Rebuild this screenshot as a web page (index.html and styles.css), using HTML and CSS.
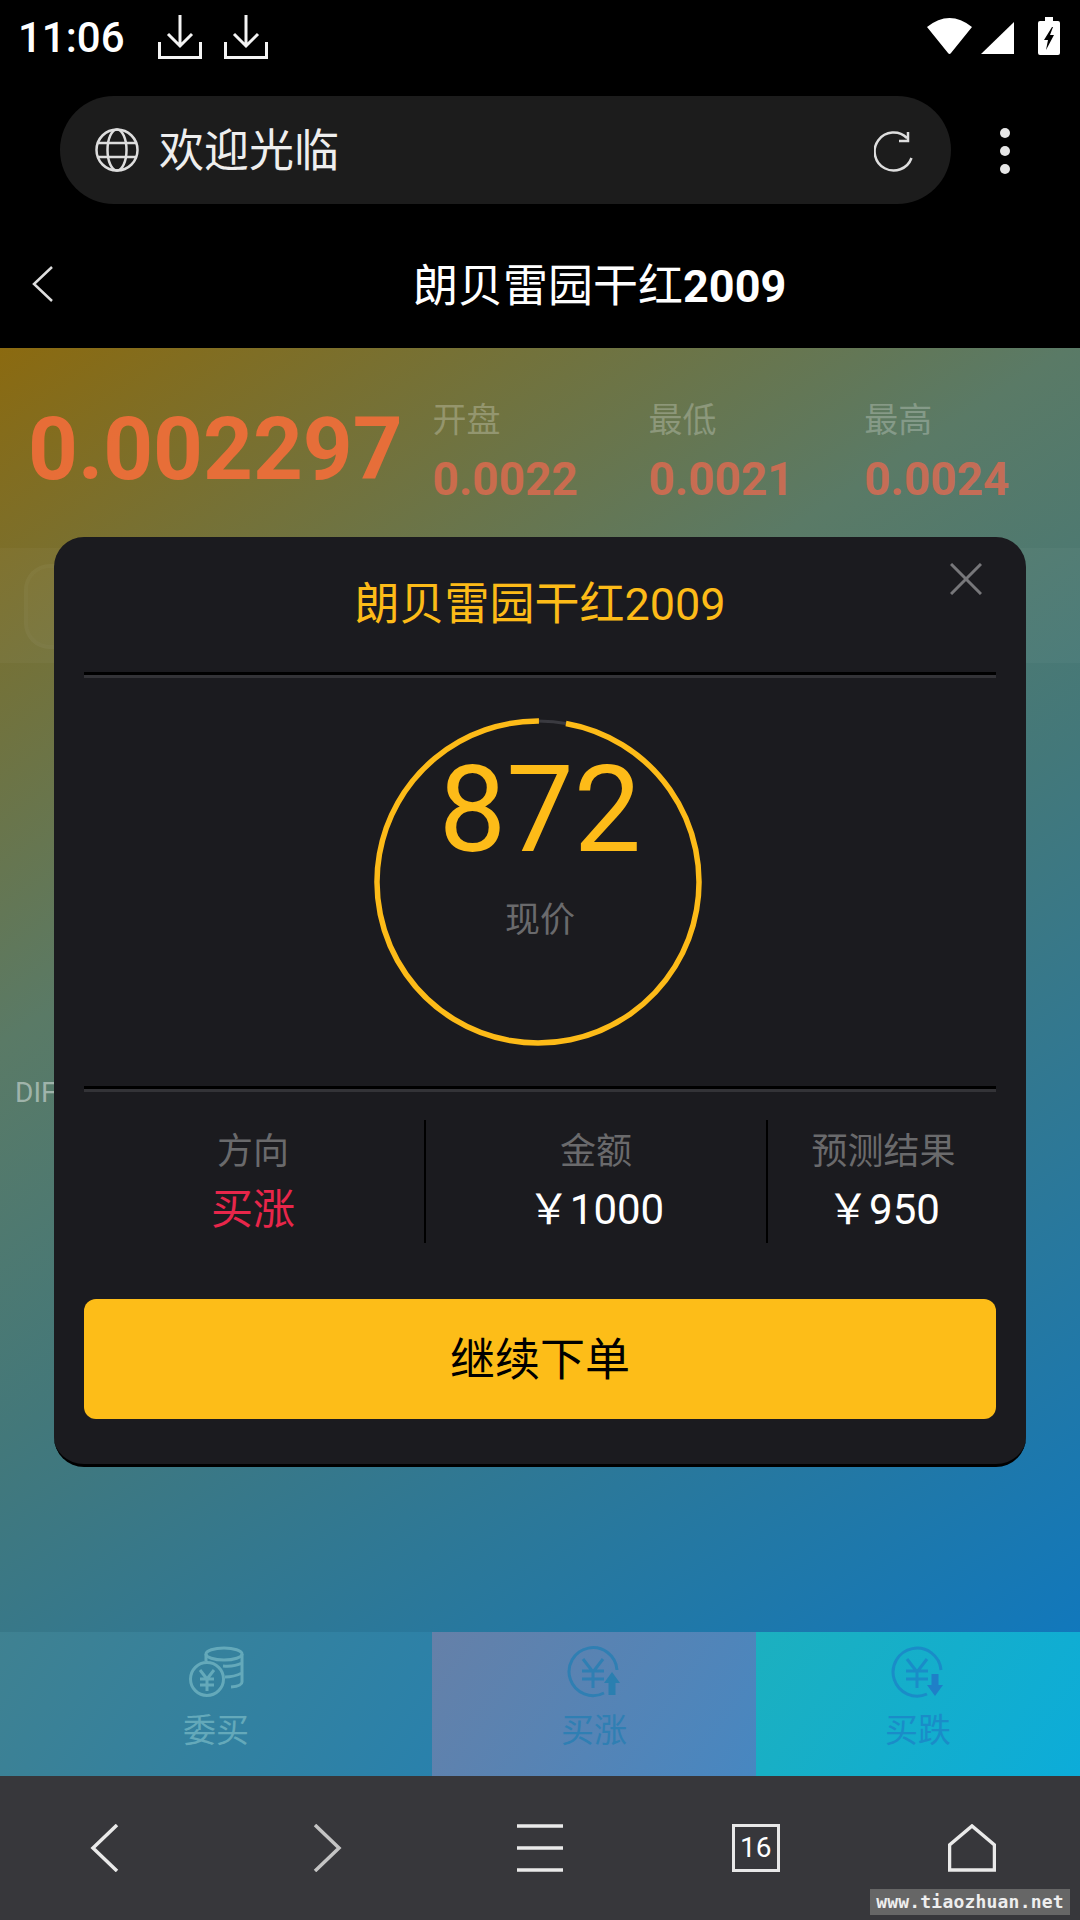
FILE: index.html
```html
<!DOCTYPE html>
<html>
	<head>
		<meta charset="UTF-8">
		<title>朗贝雷园干红2009</title>
		<link rel="stylesheet" href="styles.css">
	</head>
	<body>
		<div class="status">
			<span class="time">11:06</span>
			<svg class="dl" width="44" height="44" viewBox="0 0 44 44"><path d="M22 0V31M10 19L22 31L34 19M1.5 27V42.5H42.5V27" /></svg>
			<svg class="dl" width="44" height="44" viewBox="0 0 44 44"><path d="M22 0V31M10 19L22 31L34 19M1.5 27V42.5H42.5V27" /></svg>
			<span class="grow"></span>
			<svg class="wifi" width="45" height="36" viewBox="0 0 45 36"><path class="solid" d="M0 9Q22.5 -9 45 9L24 35Q22.5 37 21 35Z" /></svg>
			<svg class="signal" width="34" height="33" viewBox="0 0 34 33"><path class="solid" d="M34 1V33H1Z" /></svg>
			<svg class="batt" width="22" height="38" viewBox="0 0 22 38"><path class="solid" fill-rule="evenodd" d="M7 0H15V4H20Q22 4 22 6V36Q22 38 20 38H2Q0 38 0 36V6Q0 4 2 4H7ZM14 10L6 23H10L8 33L16 18H12L15 10Z" /></svg>
		</div>

		<div class="urlrow">
			<div class="url">
				<svg class="line" width="44" height="44" viewBox="0 0 44 44"><circle cx="22" cy="22" r="20.5" /><ellipse cx="22" cy="22" rx="9.5" ry="20.5" /><path d="M2 15H42M2 29H42" /></svg>
				<span class="urltext">欢迎光临</span>
				<span class="grow"></span>
				<svg class="line reload" width="42" height="42" viewBox="0 0 42 42"><path d="M37.5 27A19 19 0 1 1 33 7M34 1V10H25" /></svg>
			</div>
			<div class="dots"><i></i><i></i><i></i></div>
		</div>

		<div class="head">
			<svg class="line back" width="22" height="36" viewBox="0 0 22 36"><path d="M20 1L2 18L20 35" /></svg>
			<h1>朗贝雷园干红<b>2009</b></h1>
		</div>

		<div class="main">
			<div class="prices">
				<div class="price">0.002297</div>
				<div class="stat"><span>开盘</span><b>0.0022</b></div>
				<div class="stat"><span>最低</span><b>0.0021</b></div>
				<div class="stat"><span>最高</span><b>0.0024</b></div>
			</div>
			<div class="band"><div class="bandbox"></div></div>
			<div class="dif">DIF</div>

			<div class="modal">
				<h2>朗贝雷园干红2009</h2>
				<svg class="close" width="32" height="32" viewBox="0 0 32 32"><path d="M1 1L31 31M31 1L1 31" /></svg>
				<div class="rule"></div>
				<div class="ringwrap">
					<svg class="ring" width="330" height="330" viewBox="0 0 330 330">
						<circle class="track" cx="165" cy="165" r="161" />
						<circle class="arc" cx="165" cy="165" r="161" stroke-dasharray="984 28" transform="rotate(-80 165 165)" />
					</svg>
					<div class="count">872</div>
					<div class="countlabel">现价</div>
				</div>
				<div class="rule"></div>
				<div class="info">
					<div class="cell first"><span>方向</span><b class="red">买涨</b></div>
					<div class="cell mid"><span>金额</span><b>￥1000</b></div>
					<div class="cell last"><span>预测结果</span><b>￥950</b></div>
				</div>
				<div class="btn">继续下单</div>
			</div>
		</div>

		<div class="tabs">
			<div class="tab t1">
				<svg width="56" height="52" viewBox="0 0 56 52"><ellipse cx="36" cy="8" rx="18" ry="6" /><path d="M18 8V15M54 8V36Q54 40 43 41M35 20Q46 21 54 17M37 31Q46 31 54 27" /><circle cx="19" cy="33" r="16.5" /><path d="M12 24L19 33L26 24M12 33H26M12 39H26M19 33V45" /></svg>
				<span>委买</span>
			</div>
			<div class="tab t2">
				<svg width="56" height="52" viewBox="0 0 56 52"><path d="M51 24A24 24 0 1 0 38 47" /><path d="M17 13L27 26L37 13M16 25H38M16 33H38M27 26V42" /><path class="fillit" d="M46 26L54 37H49.5V49H42.5V37H38Z" /></svg>
				<span>买涨</span>
			</div>
			<div class="tab t3">
				<svg width="56" height="52" viewBox="0 0 56 52"><path d="M51 24A24 24 0 1 0 37 48" /><path d="M17 13L27 26L37 13M16 25H38M16 33H38M27 26V42" /><path class="fillit" d="M41.5 28H48.5V39H53L45 50L37 39H41.5Z" /></svg>
				<span>买跌</span>
			</div>
		</div>

		<div class="nav">
			<svg class="navicon" width="48" height="48" viewBox="0 0 48 48"><path d="M34 1L10 24L34 47" /></svg>
			<svg class="navicon dim" width="48" height="48" viewBox="0 0 48 48"><path d="M16 1L40 24L16 47" /></svg>
			<svg class="navicon" width="48" height="48" viewBox="0 0 48 48"><path d="M1 2H47M1 24H47M1 46H47" /></svg>
			<div class="tabcount">16</div>
			<svg class="navicon" width="48" height="48" viewBox="0 0 48 48"><path d="M1.5 46V21L24 2L46.5 21V46Z" /></svg>
			<div class="mark">www.tiaozhuan.net</div>
		</div>
	</body>
</html>
```

FILE: styles.css
```css
* {
	box-sizing: border-box;
}
html, body {
	margin: 0;
	height: 1920px;
}
body {
	width: 1080px;
	display: flex;
	flex-direction: column;
	background: #000;
	color: #fff;
	font-family: Roboto, "Noto Sans CJK SC", sans-serif;
	overflow: hidden;
}
.grow { flex: 1 }
svg { display: block; fill: none }
.solid { fill: #fff }

.status {
	height: 74px;
	display: flex;
	align-items: center;
	padding: 0 20px 0 18px;
}
.time {
	font-size: 42px;
	font-weight: 500;
	width: 140px;
}
.dl { margin-right: 22px }
.dl path {
	stroke: #f4f4f4;
	stroke-width: 3;
}
.wifi { margin-top: -3px }
.signal { margin: 0 24px 0 8px }
.batt { margin-top: -3px }

.urlrow {
	height: 130px;
	padding: 22px 0 0 60px;
	display: flex;
}
.url {
	width: 891px;
	height: 108px;
	border-radius: 54px;
	background: #1c1c1c;
	display: flex;
	align-items: center;
	padding: 0 35px;
}
.line {
	stroke: #dedede;
	stroke-width: 2.5;
}
.reload { margin-top: 4px }
.urltext {
	font-size: 45px;
	margin: -6px 0 0 20px;
	color: #eee;
}
.dots {
	margin: 32px 0 0 49px;
	display: flex;
	flex-direction: column;
	gap: 8px;
}
.dots i {
	width: 10px;
	height: 10px;
	border-radius: 50%;
	background: #e6e6e6;
}

.head {
	height: 144px;
	display: flex;
	align-items: center;
	padding: 12px 0 0 32px;
}
.back { margin-top: 4px }
.head h1 {
	font-size: 45px;
	font-weight: 400;
	margin: 0 0 0 359px;
}

.main {
	position: relative;
	flex: 1;
	background: linear-gradient(147deg, #8b6a10 0%, #5a7a66 35%, #43787a 55%, #1178bc 100%);
}
.prices {
	height: 200px;
	padding: 48px 0 0 28px;
	display: flex;
}
.price {
	width: 405px;
	font-size: 87px;
	font-weight: 700;
	line-height: 100px;
	margin-top: 3px;
	color: rgba(240, 110, 58, .92);
}
.stat {
	width: 216px;
	display: flex;
	flex-direction: column;
	color: rgba(255, 255, 255, .25);
}
.stat span {
	font-size: 34px;
	line-height: 48px;
}
.stat b {
	font-size: 46px;
	line-height: 56px;
	margin-top: 7px;
	color: rgba(240, 105, 80, .72);
}
.band {
	height: 115px;
	background: rgba(255, 255, 255, .03);
	padding: 16px 0 0 24px;
}
.bandbox {
	width: 300px;
	height: 85px;
	border: 4px solid rgba(255, 255, 255, .025);
	border-radius: 26px;
	background: rgba(255, 255, 255, .025);
}
.dif {
	margin: 413px 0 0 15px;
	font-size: 28px;
	color: rgba(255, 255, 255, .45);
}

.modal {
	position: absolute;
	left: 54px;
	top: 189px;
	width: 972px;
	height: 930px;
	padding: 0 30px;
	background: #1b1b1f;
	border-radius: 30px;
	border-bottom: 3px solid #000;
}
.modal h2 {
	height: 135px;
	margin: 0;
	padding-top: 38px;
	font-size: 45px;
	font-weight: 400;
	line-height: 60px;
	text-align: center;
	color: #fdbb18;
}
.close {
	position: absolute;
	right: 44px;
	top: 26px;
}
.close path {
	stroke: #77777a;
	stroke-width: 3;
}
.rule {
	height: 6px;
	border-top: 3px solid #000;
	background: #333337;
}
.ringwrap {
	position: relative;
	height: 408px;
	padding-top: 62px;
	text-align: center;
}
.ring {
	position: absolute;
	left: 289px;
	top: 39px;
}
.track {
	stroke: #3a3a40;
	stroke-width: 3;
}
.arc {
	stroke: #fdbb18;
	stroke-width: 5.5;
}
.count {
	font-size: 120px;
	line-height: 140px;
	color: #fdbb18;
}
.countlabel {
	font-size: 35px;
	line-height: 50px;
	margin-top: 16px;
	color: #6a6a6c;
}
.info {
	display: flex;
	height: 123px;
	margin-top: 28px;
}
.cell {
	display: flex;
	flex-direction: column;
	align-items: center;
	border-right: 2px solid #000;
}
.cell span {
	font-size: 36px;
	line-height: 50px;
	margin-top: 7px;
	color: #6a6a6c;
}
.cell b {
	font-size: 42px;
	font-weight: 400;
	line-height: 56px;
	margin-top: 5px;
}
.cell .red { color: #e8264a }
.first { width: 342px; padding-right: 2px }
.mid { width: 342px }
.last { flex: 1; border-right: 0; padding-left: 3px }
.btn {
	height: 120px;
	margin-top: 56px;
	border-radius: 12px;
	background: #fdbd18;
	color: #000;
	font-size: 45px;
	line-height: 123px;
	text-align: center;
}

.tabs {
	height: 144px;
	display: flex;
}
.tab {
	display: flex;
	flex-direction: column;
	align-items: center;
	padding-top: 14px;
	font-size: 33px;
	line-height: 44px;
}
.tab span { margin-top: 11px }
.tab svg path, .tab svg circle, .tab svg ellipse {
	stroke: currentColor;
	stroke-width: 3;
}
.tab svg .fillit { stroke: none }
.t1 {
	width: 432px;
	background: linear-gradient(125deg, #3f8191, #2981ac);
	color: #64a9ba;
}
.t2 {
	width: 324px;
	background: linear-gradient(125deg, #6580a8, #4787c1);
	color: #2f7fb3;
}
.t2 .fillit { fill: #2a7fb0 }
.t3 {
	width: 324px;
	background: linear-gradient(125deg, #1cb0bf, #0cacd9);
	color: #1a8cc8;
}
.t3 .fillit { fill: #1f7fc8 }

.nav {
	position: relative;
	height: 144px;
	background: #37373b;
	display: flex;
	justify-content: space-between;
	align-items: center;
	padding: 0 84px 0 83px;
}
.navicon path {
	stroke: #eaeaea;
	stroke-width: 3.5;
}
.navicon.dim path { stroke: #c4c4c4 }
.tabcount {
	width: 48px;
	height: 48px;
	border: 3px solid #e8e8e8;
	font-size: 28px;
	line-height: 42px;
	text-align: center;
}
.mark {
	position: absolute;
	right: 10px;
	bottom: 5px;
	width: 200px;
	height: 26px;
	background: #666;
	font-family: "DejaVu Sans Mono", monospace;
	font-size: 18px;
	font-weight: 700;
	line-height: 26px;
	text-align: center;
	letter-spacing: .2px;
	color: #eee;
}
```
